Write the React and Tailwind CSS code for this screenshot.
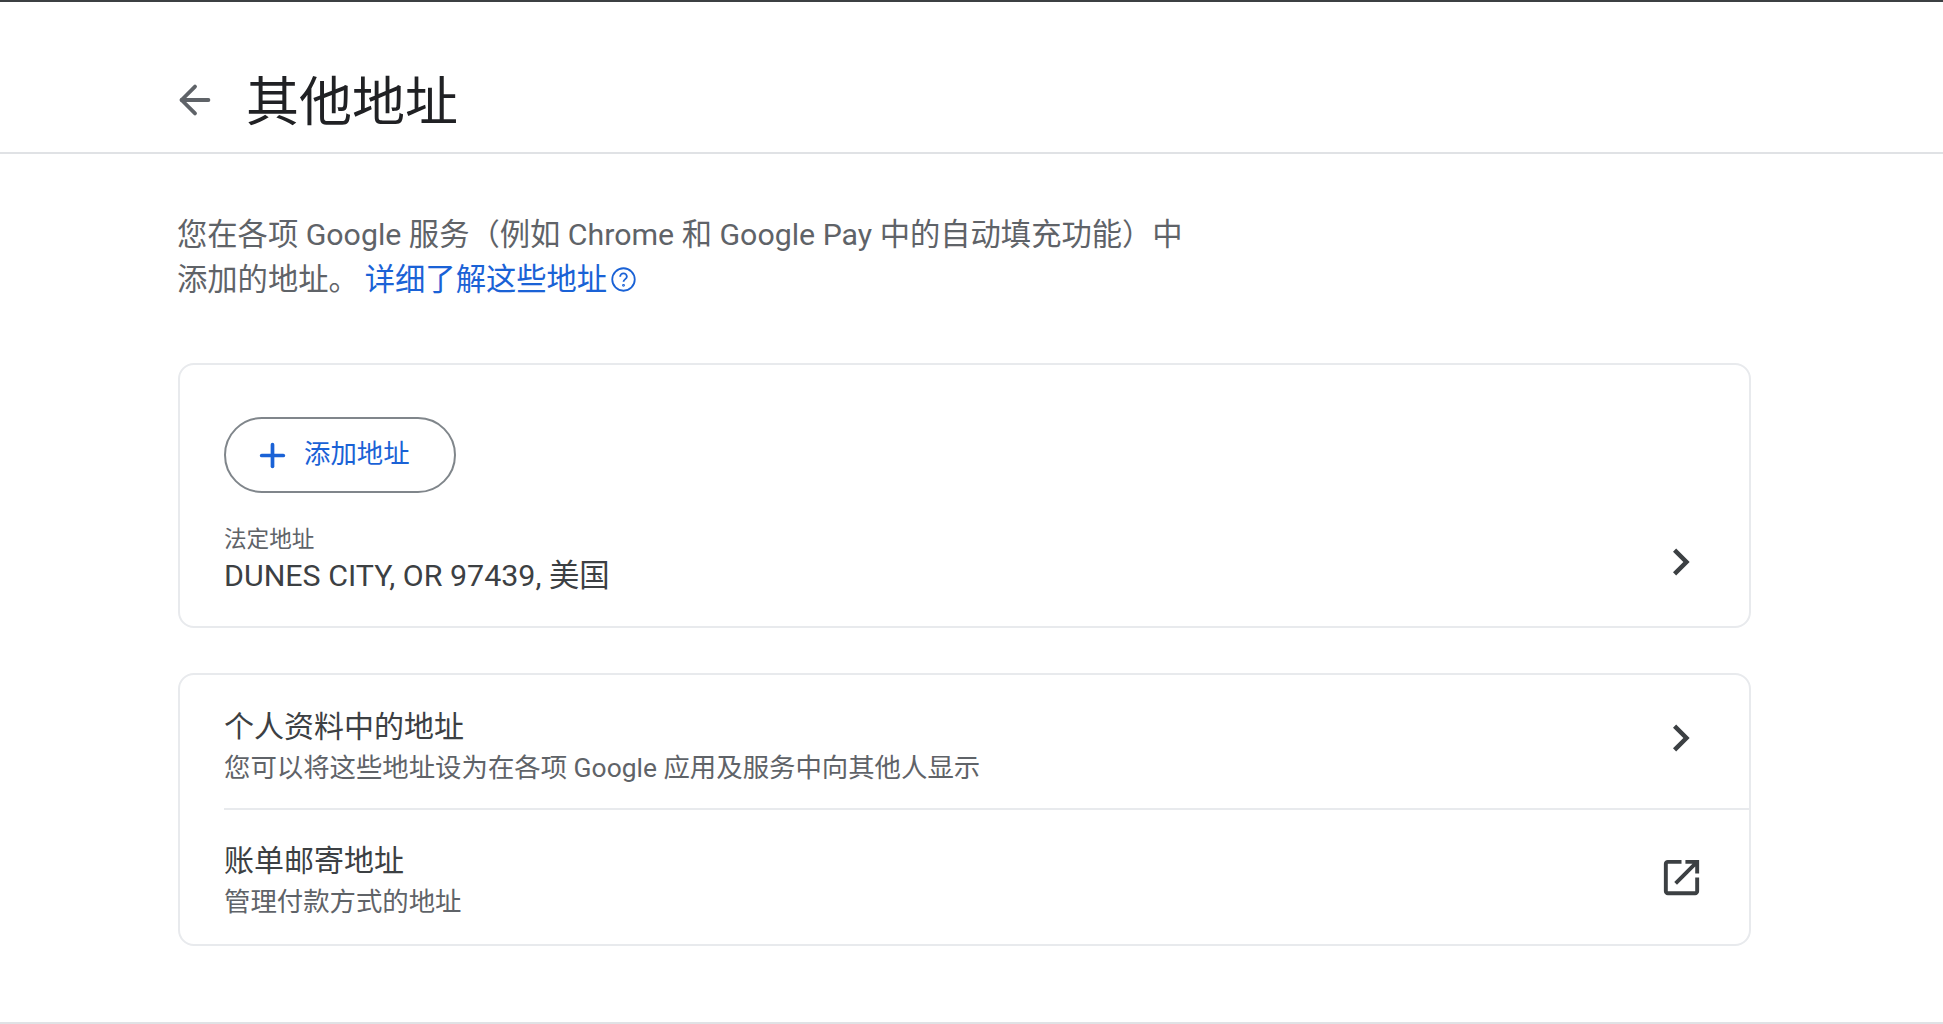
import { ArrowLeft, Plus } from "lucide-react";

const font = "font-['Roboto','Noto_Sans_CJK_SC',sans-serif]";

function Chevron({ className }) {
  return (
    <svg viewBox="0 0 24 24" className={`w-[54px] h-[54px] text-[#3c4043] fill-current ${className}`}>
      <path d="M9.4 18 8 16.6 12.6 12 8 7.4 9.4 6l6 6z" />
    </svg>
  );
}

function OpenInNew() {
  return (
    <svg viewBox="0 0 24 24" className="w-[47px] h-[47px] text-[#3c4043] fill-current">
      <path d="M5 21q-.8 0-1.4-.6T3 19V5q0-.8.6-1.4T5 3h7v2H5v14h14v-7h2v7q0 .8-.6 1.4T19 21H5Zm4.7-5.3-1.4-1.4L17.6 5H14V3h7v7h-2V6.4l-9.3 9.3Z" />
    </svg>
  );
}

function HelpCircle() {
  return (
    <svg viewBox="0 0 24 24" className="w-[27px] h-[27px] text-[#1a62d6] fill-none stroke-current" strokeWidth="1.6">
      <circle cx="12" cy="12" r="10" />
      <path d="M9 9.5a3 3 0 0 1 6 0c0 2-3 2.300-3 4.500" />
      <circle cx="12" cy="17.200" r="0.500" />
    </svg>
  );
}

function Row({ title, desc, icon, textClass }) {
  return (
    <div className="flex items-center justify-between h-full">
      <div className={textClass}>
        <div className="text-[30px] leading-[40px] text-[#3c4043]">{title}</div>
        <div className="mt-[3px] text-[26.400px] leading-[36px] text-[#5f6368]">{desc}</div>
      </div>
      {icon}
    </div>
  );
}

export default function App() {
  return (
    <div className={`${font} w-[1943px] h-[1024px] overflow-hidden bg-white flex flex-col`}>
      <div className="h-[2px] bg-[#3c4043]" />
      <header className="h-[152px] border-b-2 border-[#e0e2e5] flex items-center pl-[172px] pt-[46px]">
        <ArrowLeft className="w-[46px] h-[46px] text-[#5f6368]" strokeWidth={2} />
        <h1 className="ml-[28px] mt-[5px] text-[53px] leading-[64px] text-[#202124]">其他地址</h1>
      </header>

      <main className="flex-1 pl-[178px] flex flex-col">
        <p className="-ml-px mt-[58px] w-[1060px] text-[30.300px] leading-[45px] text-[#5f6368]">
          您在各项 Google 服务（例如 Chrome 和 Google Pay 中的自动填充功能）中
          <br />
          添加的地址。
          <span className="ml-[6px] inline-flex items-center gap-[3px] align-top text-[#1a62d6]">
            详细了解这些地址
            <HelpCircle />
          </span>
        </p>

        <section className="mt-[61px] w-[1573px] h-[265px] border-2 border-[#e8eaed] rounded-[16px] pl-[44px] pr-[40px] pt-[52px]">
          <button className="w-[232px] h-[76px] rounded-full border-2 border-[#80868b] flex items-center justify-start pl-[28px] gap-[13px] text-[26.400px] text-[#1a62d6]">
            <Plus className="w-[37px] h-[37px]" strokeWidth={2.4} />
            添加地址
          </button>
          <div className="mt-[32px] flex items-center justify-between">
            <div>
              <div className="text-[22.600px] leading-[30px] text-[#5f6368]">法定地址</div>
              <div className="mt-[1px] text-[30.400px] leading-[40px] text-[#3c4043]">DUNES CITY, OR 97439, 美国</div>
            </div>
            <Chevron className="-mt-[3px] -mb-[5px]" />
          </div>
        </section>

        <section className="mt-[45px] w-[1573px] h-[273px] border-2 border-[#e8eaed] rounded-[16px] pl-[44px]">
          <div className="h-[135px] border-b-2 border-[#e8eaed] pr-[40px]">
            <Row
              title="个人资料中的地址"
              desc="您可以将这些地址设为在各项 Google 应用及服务中向其他人显示"
              textClass="pt-[10px]"
              icon={<Chevron className="mb-[8px]" />}
            />
          </div>
          <div className="h-[134px] pr-[44px]">
            <Row title="账单邮寄地址" desc="管理付款方式的地址" textClass="pt-[6px]" icon={<OpenInNew />} />
          </div>
        </section>
      </main>
      <div className="h-[2px] bg-[#e0e2e5]" />
    </div>
  );
}
